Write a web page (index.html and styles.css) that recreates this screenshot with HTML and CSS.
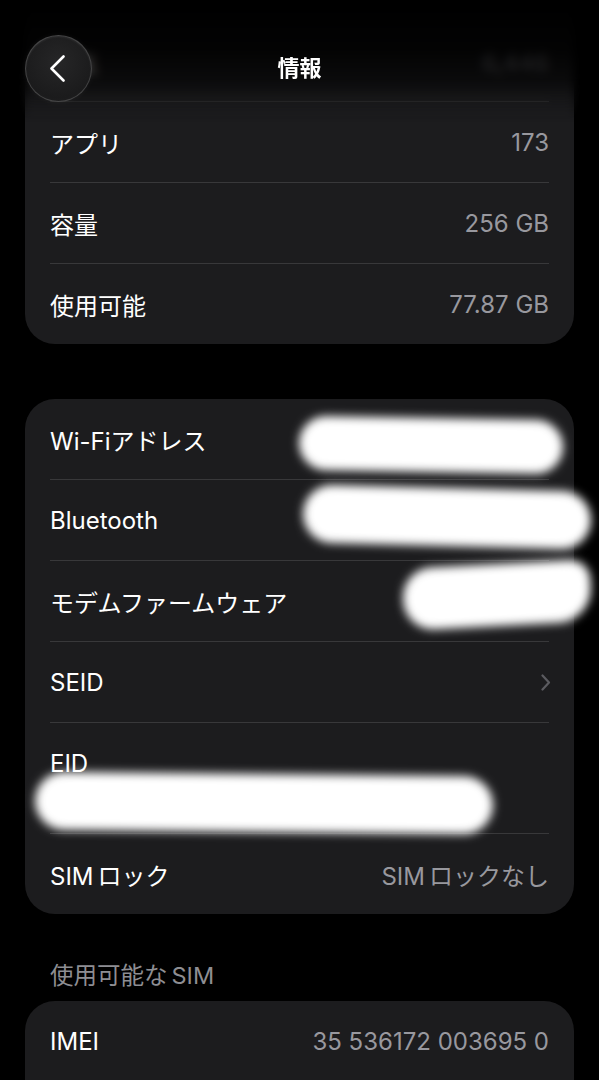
FILE: index.html
```html
<!DOCTYPE html>
<html lang="ja">
<head>
    <meta charset="utf-8">
    <title>情報</title>
    <link rel="stylesheet" href="styles.css">
</head>
<body>
    <header class="nav-bar">
        <button class="back-button" aria-label="戻る">
            <svg width="17" height="27" viewBox="0 0 17 27">
                <path d="M14.5 1.5 L2.5 13.5 L14.5 25.5" fill="none" stroke="#fff" stroke-width="2.6" stroke-linecap="round" stroke-linejoin="round"/>
            </svg>
        </button>
        <h1 class="nav-title">情報</h1>
        <span></span>
    </header>

    <main class="page">
        <section class="card card-top">
            <div class="row"><span class="label">写真</span><span class="value">6,446</span></div>
            <div class="row"><span class="label">アプリ</span><span class="value">173</span></div>
            <div class="row"><span class="label">容量</span><span class="value">256 GB</span></div>
            <div class="row"><span class="label">使用可能</span><span class="value">77.87 GB</span></div>
        </section>

        <section class="card">
            <div class="row">
                <span class="label">Wi-Fiアドレス</span>
                <span class="blob blob-wifi"></span>
            </div>
            <div class="row">
                <span class="label">Bluetooth</span>
                <span class="blob blob-bt"></span>
            </div>
            <div class="row">
                <span class="label">モデムファームウェア</span>
                <span class="blob blob-modem"></span>
            </div>
            <div class="row">
                <span class="label">SEID</span>
                <svg class="chevron" width="10" height="17" viewBox="0 0 10 17">
                    <path d="M1.5 1.5 L8 8.5 L1.5 15.5" fill="none" stroke="#5b5b60" stroke-width="2.2" stroke-linecap="round" stroke-linejoin="round"/>
                </svg>
            </div>
            <div class="row row-stacked">
                <span class="label">EID</span>
                <span class="blob blob-eid"></span>
            </div>
            <div class="row">
                <span class="label">SIM<span class="gap"></span>ロック</span>
                <span class="value">SIM<span class="gap"></span>ロックなし</span>
            </div>
        </section>

        <h2 class="section-title">使用可能な<span class="gap"></span>SIM</h2>
        <section class="card card-last">
            <div class="row"><span class="label">IMEI</span><span class="value">35 536172 003695 0</span></div>
        </section>
    </main>
</body>
</html>
```

FILE: styles.css
```css
body {
    margin: 0;
    background-color: #000;
    color: #fff;
    font-family: Inter, "Noto Sans CJK JP", sans-serif;
    overflow: hidden;
}
/* Translucent top bar over the scrolled list */
.nav-bar {
    position: fixed;
    top: 0;
    left: 0;
    right: 0;
    height: 122px;
    box-sizing: border-box;
    padding: 35px 25px 0;
    display: grid;
    grid-template-columns: 67px 1fr 67px;
    align-items: start;
    z-index: 2;
}
.nav-bar::before {
    content: "";
    position: absolute;
    inset: 0;
    z-index: -1;
    background: linear-gradient(to bottom, #000 0%, rgba(0, 0, 0, 0.88) 40%, rgba(0, 0, 0, 0.55) 72%, rgba(0, 0, 0, 0) 100%);
    backdrop-filter: blur(5px);
    -webkit-mask-image: linear-gradient(to bottom, #000 65%, transparent 100%);
    mask-image: linear-gradient(to bottom, #000 65%, transparent 100%);
}
.back-button {
    width: 67px;
    height: 67px;
    padding: 0 3px 0 0;
    border-radius: 50%;
    border: 1px solid rgba(255, 255, 255, 0.18);
    background: radial-gradient(circle at 50% 40%, #262627 0%, #1b1b1c 70%, #232324 100%);
    box-shadow: 0 0 6px rgba(255, 255, 255, 0.05), inset 0 1px 2px rgba(255, 255, 255, 0.08);
    display: flex;
    align-items: center;
    justify-content: center;
}
.nav-title {
    margin: 0;
    text-align: center;
    line-height: 67px;
    font-size: 22px;
    font-weight: 700;
}
.page {
    padding: 0 25px;
}
.card {
    background-color: #1c1c1e;
    border-radius: 30px;
    padding: 0 25px;
    margin-bottom: 55px;
}
.card-top {
    margin-top: -59px;
    padding-top: 80px;
}
.row {
    height: 80px;
    display: flex;
    align-items: center;
    justify-content: space-between;
    border-bottom: 1px solid #38383a;
    font-size: 24px;
}
.row:last-child {
    border-bottom: none;
}
.label {
    white-space: nowrap;
}
.value {
    color: #98989e;
    white-space: nowrap;
}
/* Space between latin and kana, as iOS sets it */
.gap {
    display: inline-block;
    width: 4px;
}
.chevron {
    margin-right: -2px;
}
.row-stacked {
    height: 111px;
    box-sizing: border-box;
    flex-direction: column;
    align-items: flex-start;
    justify-content: flex-start;
    padding-top: 27px;
}
.row-stacked .label {
    line-height: 28px;
}
/* White smudges hiding private values */
.blob {
    display: block;
    background-color: #fff;
    border-radius: 30px;
    filter: blur(5px);
}
.blob-wifi {
    width: 264px;
    height: 54px;
    margin-right: -14px;
    transform: translateY(6px) rotate(1deg);
}
.blob-bt {
    width: 288px;
    height: 58px;
    margin-right: -42px;
    transform: translateY(-3px) rotate(1.5deg);
}
.blob-modem {
    width: 188px;
    height: 62px;
    margin-right: -42px;
    border-radius: 30px 20px 34px 30px;
    transform: translateY(-6px) rotate(-3deg);
}
.blob-eid {
    width: 458px;
    height: 58px;
    margin: -4px 0 0 -15px;
    transform: rotate(0.6deg);
}
.section-title {
    margin: -7px 0 11px;
    padding-left: 25px;
    line-height: 28px;
    font-size: 23.5px;
    font-weight: 400;
    color: #8e8e93;
}
.card-last {
    padding-bottom: 40px;
}
```
